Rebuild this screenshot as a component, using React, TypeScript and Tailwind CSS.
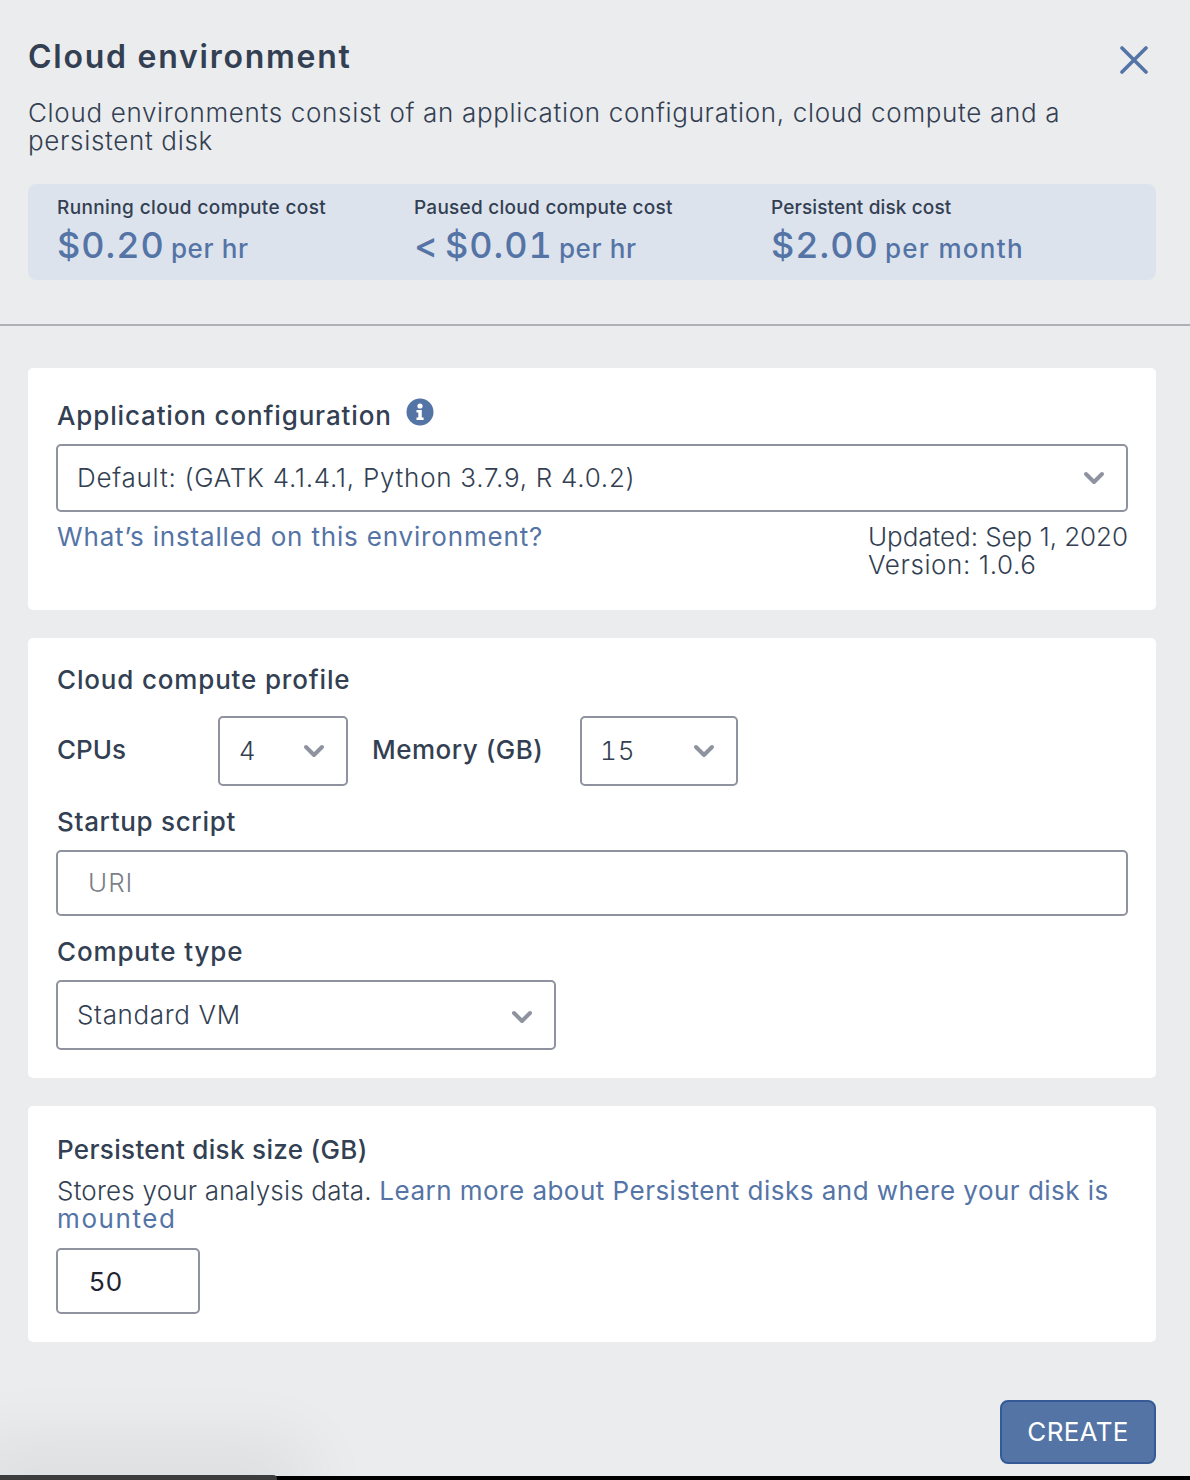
import React from "react";

function Chevron({ className = "translate-y-[1px]" }: { className?: string }) {
  return (
    <svg viewBox="0 0 22 14" className={"w-[22px] h-[14px] shrink-0 " + className} fill="none" stroke="#8f939f" strokeWidth="4" strokeLinecap="round" strokeLinejoin="round">
      <path d="M3 3 L11 11 L19 3" />
    </svg>
  );
}
function Cost({ label, value, prefix, unit, cls, track, labelTrack }: { label: string; value: string; prefix?: string; unit: string; cls: string; track: string; labelTrack: string }) {
  return (
    <div className={cls}>
      <div className={"text-[19px] leading-[24px] font-medium text-[#333f52] " + labelTrack}>{label}</div>
      <div className="h-[34px] leading-[34px] mt-[8px] whitespace-nowrap text-[#5574a6] font-medium">
        {prefix ? <span className="text-[36px] mr-[7px]">{prefix}</span> : null}
        <span className="text-[36px] tracking-[1px] tabular-nums">{value}</span>
        <span className={"text-[26px] ml-[6px] " + track}>{unit}</span>
      </div>
    </div>
  );
}
function Label({ children, className = "" }: { children: React.ReactNode; className?: string }) {
  return <div className={"text-[26px] leading-[28px] font-medium text-[#333f52] pl-[1px] pt-[1px] -mb-[1px] " + className}>{children}</div>;
}
const box = "border-2 border-[#8f939f] rounded-[5px] bg-white flex items-center";

export default function App() {
  return (
    <div className="relative h-[1480px] overflow-hidden bg-[#ebecee] text-[#333f52] font-['Inter',sans-serif] flex flex-col">
      <div className="pl-[28px] pr-[34px] pt-[36px] h-[326px] border-b-2 border-[#aeb0b5] shrink-0">
        <div className="flex justify-between items-start h-[49px]">
          <h1 className="text-[32px] leading-[42px] font-semibold text-[#333f52] tracking-[1.75px]">Cloud environment</h1>
          <svg viewBox="0 0 28 28" className="w-[28px] h-[28px] mt-[10px] mr-[8px]" fill="none" stroke="#5574a6" strokeWidth="3.6" strokeLinecap="round">
            <path d="M2 2 L26 26 M26 2 L2 26" />
          </svg>
        </div>
        <p className="mt-[14px] text-[26px] leading-[28px] font-light text-[#333f52] tracking-[0.67px]">
          Cloud environments consist of an application configuration, cloud compute and a<br />persistent disk
        </p>
        <div className="mt-[29px] h-[96px] rounded-[8px] bg-[#dde3ed] flex pl-[29px] pt-[12px]">
          <Cost cls="w-[357px]" labelTrack="tracking-[0.38px]" track="tracking-[0.6px]" label="Running cloud compute cost" value="$0.20" unit="per hr" />
          <Cost cls="w-[357px]" labelTrack="tracking-[0.26px]" track="tracking-[0.6px]" label="Paused cloud compute cost" prefix="<" value="$0.01" unit="per hr" />
          <Cost cls="w-[357px]" labelTrack="tracking-[0.13px]" track="tracking-[1.3px]" label="Persistent disk cost" value="$2.00" unit="per month" />
        </div>
      </div>

      <div className="pl-[28px] pr-[34px] pt-[42px] flex flex-col gap-[28px]">
        <section className="h-[242px] bg-white rounded-[5px] px-[28px] pt-[33px]">
          <div className="flex items-center h-[28px]">
            <Label className="tracking-[0.85px]">Application configuration</Label>
            <svg viewBox="0 0 28 28" className="w-[28px] h-[28px] ml-[14px] -mt-[6px]">
              <circle cx="14" cy="14" r="13.5" fill="#5574a6" />
              <circle cx="14" cy="8" r="2.6" fill="#fff" />
              <path d="M10.5 12 H15.8 V19.5 H17.6 V22 H10.5 V19.5 H12.3 V14.5 H10.5 Z" fill="#fff" />
            </svg>
          </div>
          <div className={"mt-[15px] h-[68px] w-full justify-between pl-[20px] pr-[21px] pb-[2px] " + box}>
            <span className="text-[26px] font-light tracking-[0.74px] -ml-[1px]">Default: (GATK 4.1.4.1, Python 3.7.9, R 4.0.2)</span>
            <Chevron />
          </div>
          <div className="mt-[11px] flex justify-between w-full text-[26px] leading-[28px] font-light">
            <a className="text-[#5574a6] font-normal tracking-[0.83px] pl-[1px]">What’s installed on this environment?</a>
            <div className="whitespace-nowrap w-[260px] flex flex-col">
              <span className="tracking-[-0.05px]">Updated: Sep 1, 2020</span>
              <span className="tracking-[0.6px]">Version: 1.0.6</span>
            </div>
          </div>
        </section>

        <section className="h-[440px] bg-white rounded-[5px] px-[28px] pt-[27px]">
          <Label className="tracking-[0.83px]">Cloud compute profile</Label>
          <div className="mt-[23px] flex items-center h-[70px]">
            <Label className="w-[162px] -mt-[4px]">CPUs</Label>
            <div className={"w-[130px] h-[70px] justify-between pl-[20px] pr-[21px] pb-[2px] " + box}>
              <span className="text-[26px] font-light -ml-[1px]">4</span><Chevron />
            </div>
            <Label className="ml-[23px] w-[209px] tracking-[0.5px] -mt-[4px]">Memory (GB)</Label>
            <div className={"w-[158px] h-[70px] justify-between pl-[20px] pr-[21px] pb-[2px] " + box}>
              <span className="text-[26px] font-light tabular-nums tracking-[1px] -ml-[2px]">15</span><Chevron />
            </div>
          </div>
          <Label className="mt-[21px] tracking-[0.68px]">Startup script</Label>
          <div className={"mt-[15px] h-[66px] w-full pl-[30px] pb-[1px] " + box}>
            <span className="text-[26px] font-light text-[#7b7f88] tracking-[1px]">URI</span>
          </div>
          <Label className="mt-[21px] tracking-[0.85px]">Compute type</Label>
          <div className={"mt-[15px] h-[70px] w-[500px] justify-between pl-[19px] pr-[21px] pb-[2px] " + box}>
            <span className="text-[26px] font-light tracking-[0.65px]">Standard VM</span><Chevron className="translate-y-[3px]" />
          </div>
        </section>

        <section className="h-[236px] bg-white rounded-[5px] px-[28px] pt-[29px]">
          <Label className="tracking-[0.33px]">Persistent disk size (GB)</Label>
          <p className="mt-[14px] text-[26px] leading-[28px] font-light pl-[1px] tracking-[0.2px]">
            Stores your analysis data. <a className="text-[#5574a6] font-normal tracking-[0.48px]">Learn more about Persistent disks and where your disk is <span className="tracking-[1.6px]">mounted</span></a>
          </p>
          <div className={"mt-[15px] h-[66px] w-[144px] pl-[31px] " + box}>
            <span className="text-[26px] font-normal text-[#1f2530] tracking-[1px]">50</span>
          </div>
        </section>
      </div>

      <div className="flex justify-end pr-[34px] mt-[58px]">
        <button className="w-[156px] h-[64px] rounded-[8px] bg-[#5574a6] border-2 border-[#355a96] text-white text-[26px] font-normal tracking-[0.3px] pb-[2px]">CREATE</button>
      </div>

      <div className="absolute left-0 right-0 bottom-0 h-[4px] bg-black" />
      <div className="absolute left-0 bottom-0 h-[5px] w-[277px] bg-[#3c3c3c] rounded-tr-[4px] shadow-[0_0_70px_32px_rgba(0,0,0,0.065)]" />
    </div>
  );
}
